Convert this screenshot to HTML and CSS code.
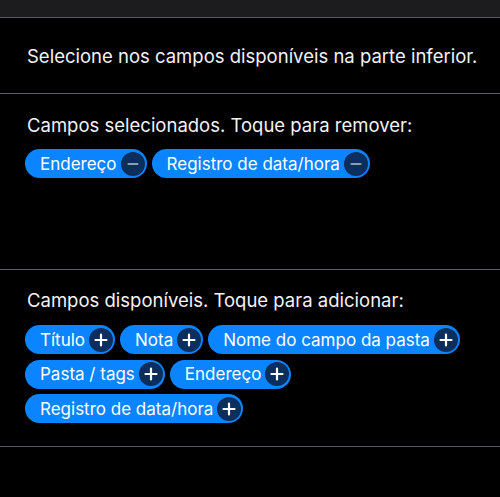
FILE: index.html
```html
<!DOCTYPE html>
<html lang="pt">
<head>
<meta charset="utf-8">
<link rel="stylesheet" href="styles.css">
</head>
<body>
<div class="topbar"></div>
<section class="section intro">
  <p class="label">Selecione nos campos disponíveis na parte inferior.</p>
</section>
<section class="section selected">
  <p class="label">Campos selecionados. Toque para remover:</p>
  <div class="chips">
    <span class="chip">Endereço<span class="btn minus"><svg viewBox="0 0 24 24"><path d="M7.5 12h9"/></svg></span></span>
    <span class="chip">Registro de data/hora<span class="btn minus"><svg viewBox="0 0 24 24"><path d="M7.5 12h9"/></svg></span></span>
  </div>
</section>
<section class="section available">
  <p class="label">Campos disponíveis. Toque para adicionar:</p>
  <div class="chips">
    <span class="chip">Título<span class="btn plus"><svg viewBox="0 0 24 24"><path d="M6.5 12h11M12 6.5v11"/></svg></span></span>
    <span class="chip">Nota<span class="btn plus"><svg viewBox="0 0 24 24"><path d="M6.5 12h11M12 6.5v11"/></svg></span></span>
    <span class="chip">Nome do campo da pasta<span class="btn plus"><svg viewBox="0 0 24 24"><path d="M6.5 12h11M12 6.5v11"/></svg></span></span>
    <span class="chip">Pasta / tags<span class="btn plus"><svg viewBox="0 0 24 24"><path d="M6.5 12h11M12 6.5v11"/></svg></span></span>
    <span class="chip">Endereço<span class="btn plus"><svg viewBox="0 0 24 24"><path d="M6.5 12h11M12 6.5v11"/></svg></span></span>
    <span class="chip">Registro de data/hora<span class="btn plus"><svg viewBox="0 0 24 24"><path d="M6.5 12h11M12 6.5v11"/></svg></span></span>
  </div>
</section>
</body>
</html>
```
FILE: styles.css
```css
html, body {
  margin: 0;
  padding: 0;
  background: #000;
}
body {
  font-family: Inter, "Noto Sans", "Liberation Sans", sans-serif;
  color: #fff;
  width: 500px;
  height: 497px;
  overflow: hidden;
}
.topbar {
  height: 17px;
  background: #1c1c1e;
  border-bottom: 1px solid #5a5a5e;
}
.section {
  border-bottom: 1px solid #5a5a5e;
  padding: 0 20px 0 27px;
}
.label {
  margin: 0;
  font-size: 18.5px;
  line-height: 22px;
  color: #f2f2f7;
  white-space: nowrap;
}
.intro {
  padding-top: 27px;
  padding-bottom: 26px;
}
.selected {
  padding-top: 20px;
  height: 176px;
  box-sizing: border-box;
}
.available {
  padding-top: 19px;
  padding-bottom: 23px;
}
.chips {
  display: flex;
  flex-wrap: wrap;
  gap: 5.5px 5px;
  margin-top: 13px;
  margin-left: -2px;
}
.available .chips {
  margin-top: 14px;
}
.chip {
  display: inline-flex;
  align-items: center;
  height: 29px;
  box-sizing: border-box;
  padding: 0 2px 0 15px;
  border-radius: 15px;
  background: #0a84ff;
  color: #fff;
  font-size: 17px;
  white-space: nowrap;
}
.btn {
  width: 24px;
  height: 24px;
  border-radius: 50%;
  background: #0c2e5c;
  margin-left: 4px;
  display: inline-flex;
  align-items: center;
  justify-content: center;
}
.btn svg {
  width: 24px;
  height: 24px;
  fill: none;
  stroke-width: 2.2;
  stroke-linecap: round;
}
.minus svg { stroke: #8a9bb8; }
.plus svg { stroke: #fff; }
```
